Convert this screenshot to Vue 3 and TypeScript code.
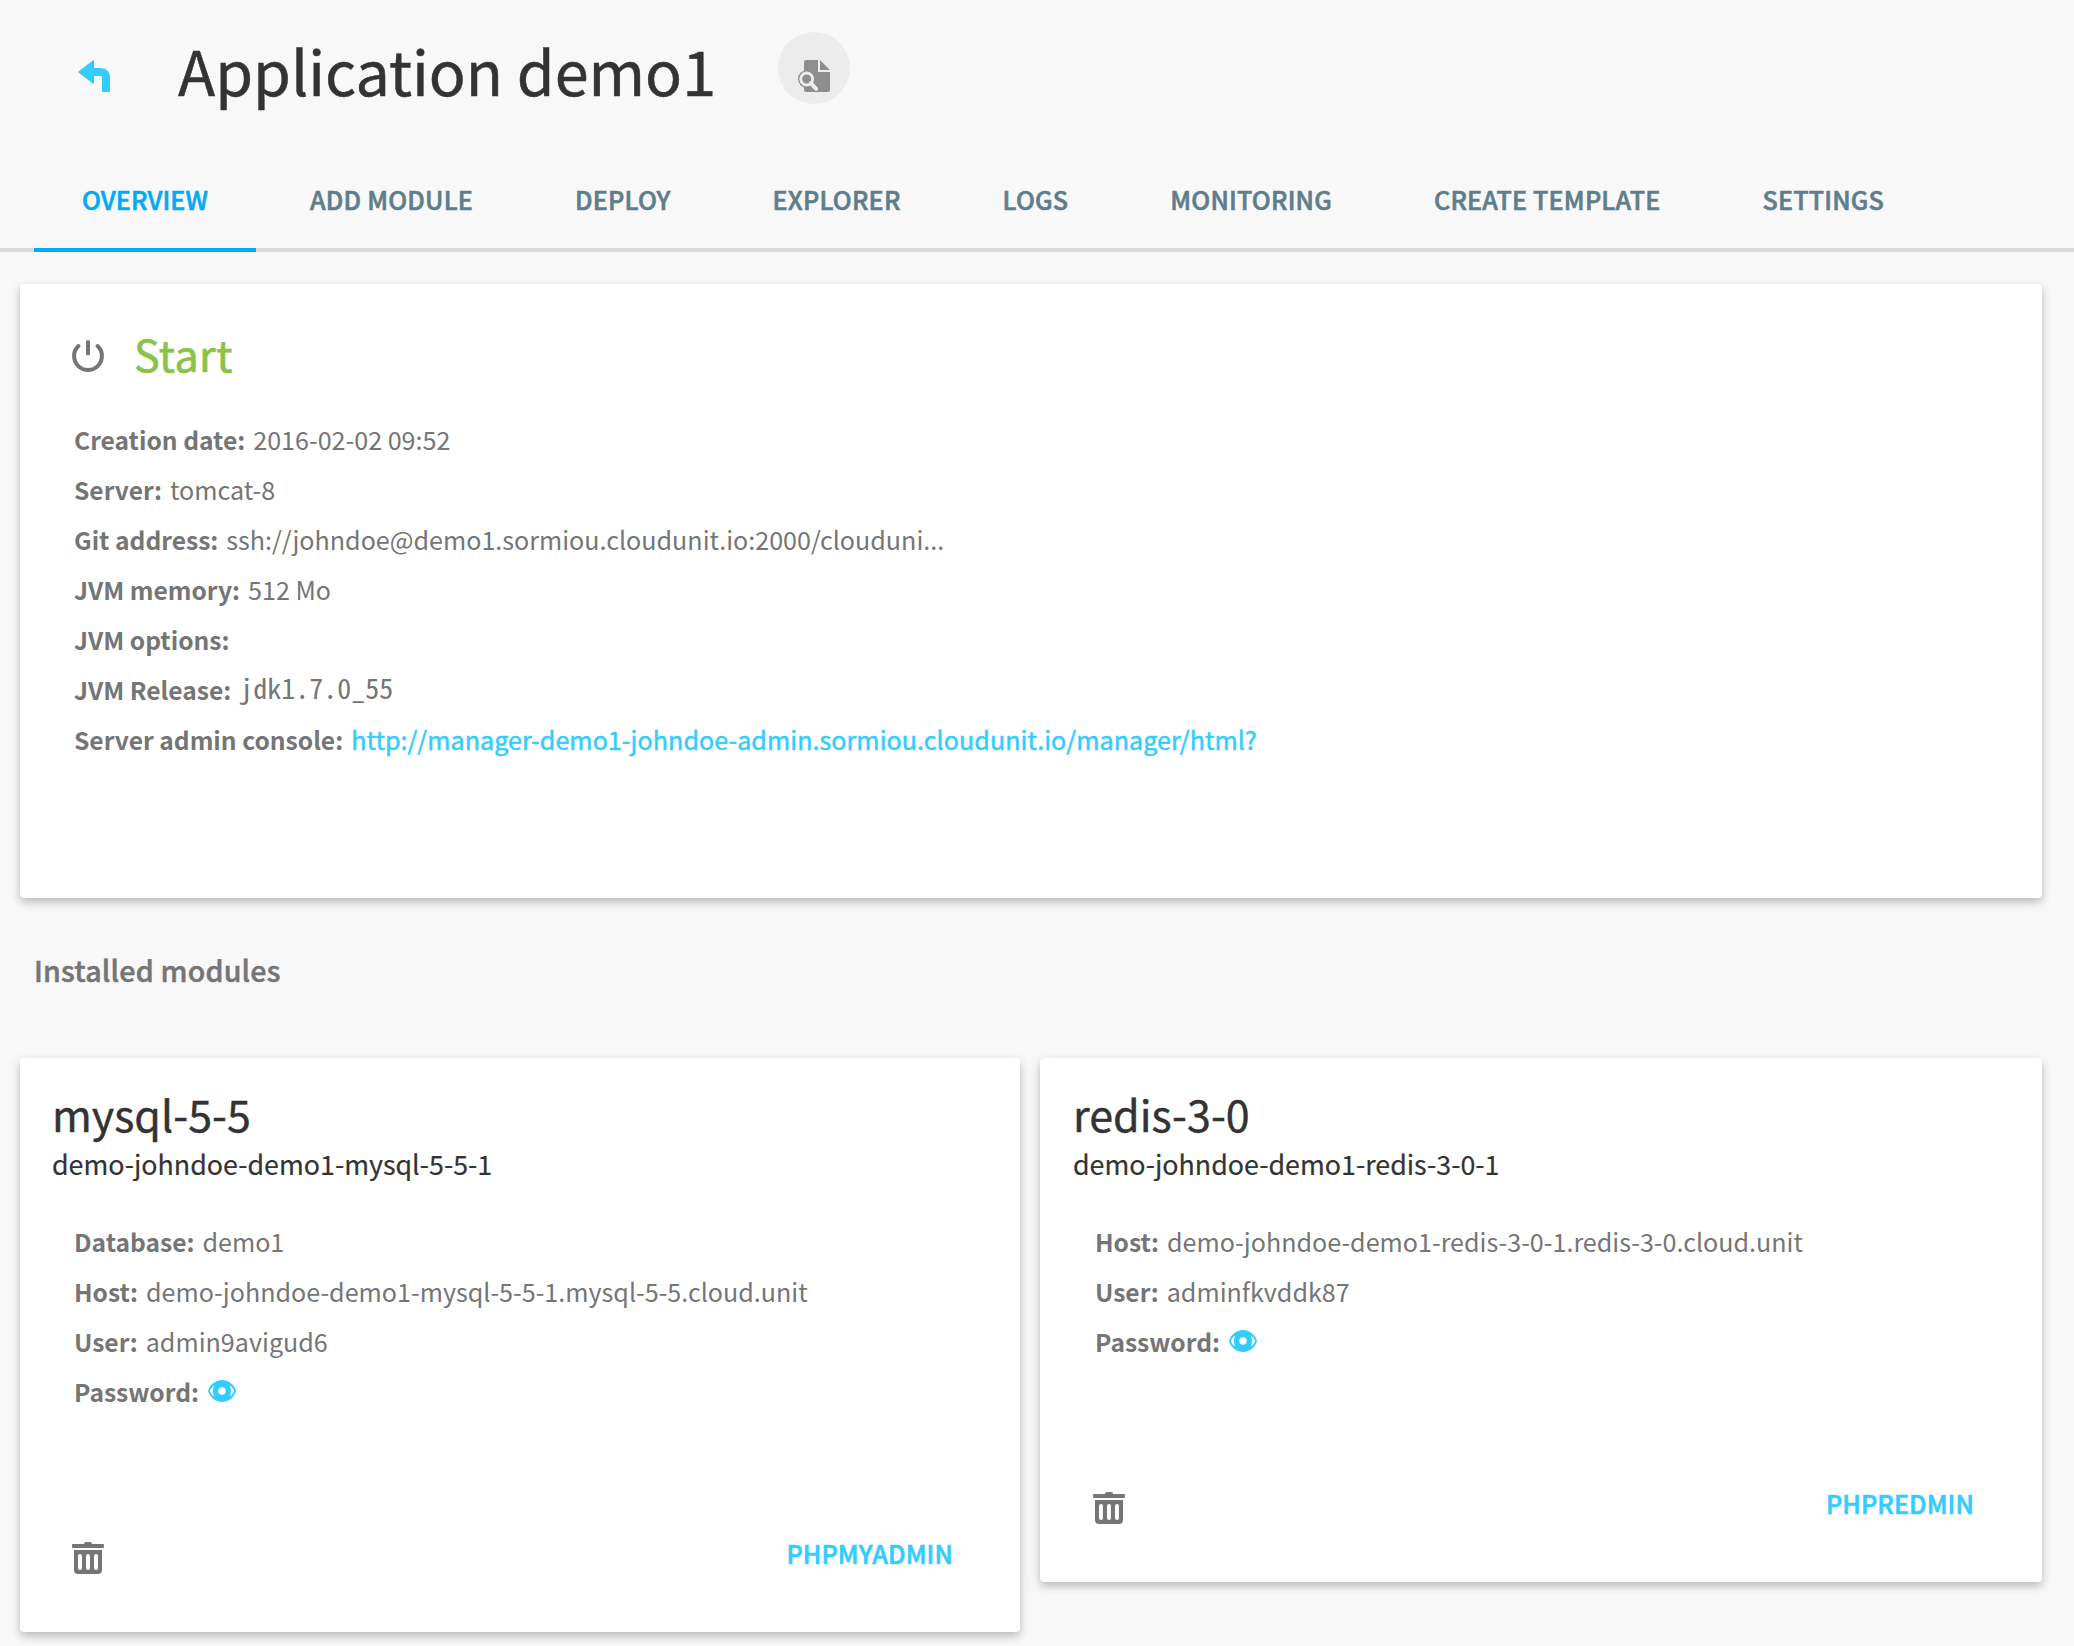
<script setup lang="ts">
interface Field {
  label: string
  value?: string
  kind?: 'mono' | 'link' | 'secret'
}

interface Module {
  name: string
  container: string
  admin: string
  fields: Field[]
}

const tabs: string[] = [
  'OVERVIEW',
  'ADD MODULE',
  'DEPLOY',
  'EXPLORER',
  'LOGS',
  'MONITORING',
  'CREATE TEMPLATE',
  'SETTINGS',
]

const details: Field[] = [
  { label: 'Creation date:', value: '2016-02-02 09:52' },
  { label: 'Server:', value: 'tomcat-8' },
  { label: 'Git address:', value: 'ssh://johndoe@demo1.sormiou.cloudunit.io:2000/clouduni...' },
  { label: 'JVM memory:', value: '512 Mo' },
  { label: 'JVM options:' },
  { label: 'JVM Release:', value: 'jdk1.7.0_55', kind: 'mono' },
  {
    label: 'Server admin console:',
    value: 'http://manager-demo1-johndoe-admin.sormiou.cloudunit.io/manager/html?',
    kind: 'link',
  },
]

const modules: Module[] = [
  {
    name: 'mysql-5-5',
    container: 'demo-johndoe-demo1-mysql-5-5-1',
    admin: 'PHPMYADMIN',
    fields: [
      { label: 'Database:', value: 'demo1' },
      { label: 'Host:', value: 'demo-johndoe-demo1-mysql-5-5-1.mysql-5-5.cloud.unit' },
      { label: 'User:', value: 'admin9avigud6' },
      { label: 'Password:', kind: 'secret' },
    ],
  },
  {
    name: 'redis-3-0',
    container: 'demo-johndoe-demo1-redis-3-0-1',
    admin: 'PHPREDMIN',
    fields: [
      { label: 'Host:', value: 'demo-johndoe-demo1-redis-3-0-1.redis-3-0.cloud.unit' },
      { label: 'User:', value: 'adminfkvddk87' },
      { label: 'Password:', kind: 'secret' },
    ],
  },
]
</script>

<template>
  <div class="page">
    <header class="header">
      <svg class="back" viewBox="0 0 32 32">
        <path d="M0 12 15 .3Q16 0 16 1V8H22Q32 8 32 18V30.5Q32 32 30.5 32H25.5Q24 32 24 30.5V18Q24 16 22 16H16V23Q16 24 15 23.7Z" />
      </svg>
      <h1 class="title">Application demo1</h1>
      <button class="round">
        <svg viewBox="0 0 32 32">
          <path class="doc" d="M8 0H20V12H32V30Q32 32 30 32H8Q6 32 6 30V2Q6 0 8 0ZM22 0 32 10H22Z" />
          <circle class="doc" cx="8.7" cy="19" r="8.7" />
          <path class="lens" d="M12.8 23.2 18.2 28.8" />
          <circle class="ring" cx="8.7" cy="19" r="6" />
        </svg>
      </button>
    </header>

    <nav class="tabs">
      <a v-for="(tab, i) in tabs" :key="tab" class="tab" :class="{ active: i === 0 }">{{ tab }}</a>
    </nav>

    <section class="card overview">
      <div class="status">
        <svg viewBox="0 0 32 32">
          <path d="M6.4 6A13.9 13.9 0 1 0 25.6 6M16 2V13.6" />
        </svg>
        <span>Start</span>
      </div>
      <p v-for="f in details" :key="f.label" class="field">
        <b>{{ f.label }}</b>
        <span v-if="f.value" :class="f.kind">{{ f.value }}</span>
      </p>
    </section>

    <h2 class="heading">Installed modules</h2>

    <div class="modules">
      <section v-for="m in modules" :key="m.name" class="card module">
        <h3>{{ m.name }}</h3>
        <h4>{{ m.container }}</h4>
        <div class="fields">
          <p v-for="f in m.fields" :key="f.label" class="field">
            <b>{{ f.label }}</b>
            <span v-if="f.value">{{ f.value }}</span>
            <svg v-if="f.kind === 'secret'" class="eye" viewBox="0 0 28 22">
              <path d="M0 11C2 4 8 0 14 0S26 4 28 11C26 18 20 22 14 22S2 18 0 11Z" />
              <path class="white" d="M6.2 5.4C3.8 7 2.4 9 1.9 11 2.4 13 3.8 15 6.2 16.6 4.6 13 4.6 9 6.2 5.4ZM21.8 5.4C24.2 7 25.6 9 26.1 11 25.6 13 24.2 15 21.8 16.6 23.4 13 23.4 9 21.8 5.4Z" />
              <circle class="white" cx="14" cy="11" r="3.7" />
            </svg>
          </p>
        </div>
        <footer class="actions">
          <svg class="trash" viewBox="0 0 32 32">
            <path d="M12 2Q12 0 14 0H18Q20 0 20 2H31Q32 2 32 3V5Q32 6 31 6H1Q0 6 0 5V3Q0 2 1 2Z" />
            <path
              fill-rule="evenodd"
              d="M2 8H30V28Q30 32 26 32H6Q2 32 2 28ZM8 12Q6 12 6 14V26Q6 28 8 28T10 26V14Q10 12 8 12ZM16 12Q14 12 14 14V26Q14 28 16 28T18 26V14Q18 12 16 12ZM24 12Q22 12 22 14V26Q22 28 24 28T26 26V14Q26 12 24 12Z"
            />
          </svg>
          <a>{{ m.admin }}</a>
        </footer>
      </section>
    </div>
  </div>
</template>

<style>
body {
  background: #f8f8f8;
}
</style>

<style scoped>
.page {
  box-sizing: border-box;
  width: 2074px;
  height: 1646px;
  overflow: hidden;
  background: #f8f8f8;
  color: #757575;
  font-family: 'Noto Sans CJK SC', 'Noto Sans CJK JP', sans-serif;
  font-size: 25.1px;
  white-space: nowrap;
}
h1,
h2,
h3,
h4,
p {
  margin: 0;
  font-weight: 400;
}
.header {
  display: flex;
  align-items: flex-start;
  height: 156px;
  padding-left: 78px;
}
.back {
  width: 32px;
  height: 32px;
  margin-top: 60px;
  fill: #33ccff;
}
.title {
  width: 600px;
  margin: 30px 0 0 68px;
  color: #333;
  font-size: 61.1px;
  line-height: 80px;
  -webkit-text-stroke: 0.5px;
}
.round {
  display: flex;
  align-items: flex-start;
  box-sizing: border-box;
  width: 72px;
  height: 72px;
  margin-top: 32px;
  padding: 28px 20px 0;
  border: 0;
  border-radius: 50%;
  background: #ececec;
}
.round svg {
  width: 32px;
  height: 32px;
}
.doc {
  fill: #8e8e8e;
}
.lens,
.ring {
  fill: none;
  stroke: #ececec;
  stroke-width: 2.8;
}
.lens {
  stroke-width: 4;
  stroke-linecap: round;
}
.tabs {
  display: flex;
  gap: 6px;
  height: 92px;
  padding-left: 34px;
  border-bottom: 4px solid #dadada;
}
.tab {
  height: 92px;
  padding: 0 48px;
  border-bottom: 4px solid transparent;
  color: #607d8b;
  font-weight: 500;
  line-height: 86px;
  letter-spacing: 0.2px;
  -webkit-text-stroke: 0.6px;
}
.tab.active {
  border-color: #03a9f4;
  color: #03a9f4;
  letter-spacing: 0.1px;
}
.card {
  box-sizing: border-box;
  border-radius: 4px;
  background: #fff;
  box-shadow: 0 4px 10px rgba(0, 0, 0, 0.26);
}
.overview {
  width: 2022px;
  height: 614px;
  margin: 32px 0 0 20px;
  padding: 41px 54px 0;
}
.status {
  display: flex;
  align-items: flex-start;
  height: 60px;
  margin: 0 0 29px -2px;
  color: #8bc34a;
  font-size: 43px;
  line-height: 56px;
  letter-spacing: 0.4px;
  -webkit-text-stroke: 0.7px;
}
.status svg {
  width: 32px;
  height: 32px;
  margin: 15px 30px 0 0;
  fill: none;
  stroke: #757575;
  stroke-width: 4;
  stroke-linecap: round;
}
.field {
  display: flex;
  align-items: center;
  height: 50px;
  line-height: 50px;
}
.field b {
  margin-right: 8px;
  font-size: 24.6px;
  font-weight: 700;
}
.mono {
  padding-bottom: 3px;
  font-family: 'Noto Sans Mono CJK SC', 'Liberation Mono', monospace;
  font-size: 28px;
  line-height: 47px;
}
.link {
  color: #33ccff;
  letter-spacing: 0.04px;
  -webkit-text-stroke: 0.5px;
}
.heading {
  height: 160px;
  padding-left: 34px;
  font-size: 28.6px;
  font-weight: 500;
  line-height: 143px;
  letter-spacing: 0.2px;
  -webkit-text-stroke: 0.5px;
}
.modules {
  display: flex;
  align-items: flex-start;
  gap: 20px;
  padding-left: 20px;
}
.module {
  width: 1000px;
  padding: 28px 31px 44px 32px;
}
.module:last-child {
  width: 1002px;
  padding: 28px 32px 44px 33px;
}
.module h3 {
  height: 56px;
  color: #333;
  font-size: 43px;
  line-height: 54px;
  -webkit-text-stroke: 0.4px;
}
.module h4 {
  height: 74px;
  color: #333;
  font-size: 26.8px;
  line-height: 44px;
  -webkit-text-stroke: 0.2px;
}
.fields {
  padding-left: 22px;
}
.eye {
  width: 28px;
  height: 22px;
  margin-left: 1px;
  fill: #33ccff;
}
.white {
  fill: #fff;
}
.actions {
  display: flex;
  justify-content: space-between;
  height: 60px;
  padding: 112px 36px 0 20px;
}
.trash {
  width: 32px;
  height: 32px;
  margin-top: 14px;
  fill: #757575;
}
.actions a {
  color: #33ccff;
  font-weight: 500;
  line-height: 50px;
  letter-spacing: 0.1px;
  -webkit-text-stroke: 0.6px;
}
</style>
